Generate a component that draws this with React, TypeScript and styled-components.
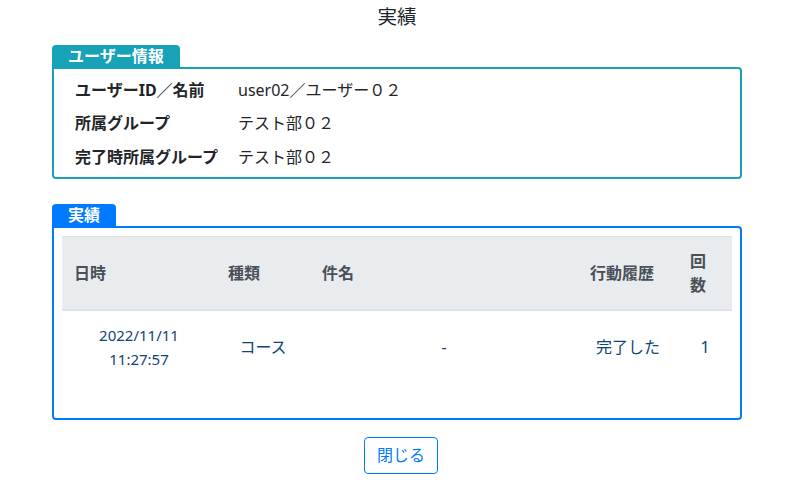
import { Fragment } from "react";
import styled, { createGlobalStyle } from "styled-components";

const GlobalStyle = createGlobalStyle`
  html, body {
    margin: 0;
    padding: 0;
    background: #fff;
  }
  body {
    font-family: "Noto Sans", "Noto Sans CJK JP", sans-serif;
    font-size: 16px;
    line-height: 1.5;
    color: #212529;
  }
`;

const Page = styled.div`
  width: 690px;
  margin-left: 52px;
  padding-top: 2px;
`;

const Title = styled.h1`
  margin: 0 0 13px;
  font-size: 19.5px;
  font-weight: 400;
  line-height: 30px;
  text-align: center;
  color: #212529;
`;

const Section = styled.section`
  display: flex;
  flex-direction: column;
  align-items: flex-start;
  margin-bottom: 25px;
`;

const Tab = styled.div<{ color: string }>`
  background: ${(p) => p.color};
  color: #fff;
  font-weight: 700;
  font-size: 16px;
  line-height: 22px;
  height: 22px;
  padding: 0 16px;
  border-radius: 4px 4px 0 0;
`;

const Panel = styled.div<{ color: string }>`
  align-self: stretch;
  border: 2px solid ${(p) => p.color};
  border-radius: 0 4px 4px 4px;
`;

const InfoGrid = styled.div`
  display: grid;
  grid-template-columns: 163px 1fr;
  grid-auto-rows: 33.5px;
  align-items: center;
  padding: 4px 21px 3px;
`;

const Label = styled.div`
  font-weight: 700;
  font-size: 16px;
`;

const Value = styled.div`
  font-size: 16px;
`;

const TableWrap = styled.div`
  padding: 8px 8px 35px;
`;

const Table = styled.table`
  width: 100%;
  border-collapse: collapse;
  table-layout: fixed;
`;

const Th = styled.th`
  background: #e9ecef;
  color: #495057;
  font-weight: 700;
  text-align: left;
  padding: 12px;
  border-top: 1px solid #dee2e6;
  border-bottom: 2px solid #dee2e6;
  vertical-align: middle;
  font-size: 16px;
  line-height: 24px;
`;

const Td = styled.td<{ $small?: boolean }>`
  color: #0f4377;
  text-align: center;
  padding: 12px;
  vertical-align: middle;
  font-size: ${(p) => (p.$small ? "15px" : "16px")};
  line-height: 24px;
`;

const Footer = styled.div`
  display: flex;
  justify-content: center;
  margin-top: -8px;
  padding-left: 8px;
`;

const CloseButton = styled.button`
  font-family: inherit;
  font-size: 16px;
  line-height: 24px;
  color: #007bff;
  background: #fff;
  border: 1px solid #007bff;
  border-radius: 4px;
  padding: 5.5px 12px;
  cursor: pointer;
`;

const columns = [
  { key: "date", label: "日時", width: 154 },
  { key: "kind", label: "種類", width: 94 },
  { key: "name", label: "件名", width: 268 },
  { key: "action", label: "行動履歴", width: 100 },
  { key: "count", label: "回数", width: 54 },
];

const info = [
  ["ユーザーID／名前", "user02／ユーザー０２"],
  ["所属グループ", "テスト部０２"],
  ["完了時所属グループ", "テスト部０２"],
];

export default function App() {
  return (
    <>
      <GlobalStyle />
      <Page>
        <Title>実績</Title>

        <Section>
          <Tab color="#17a2b8">ユーザー情報</Tab>
          <Panel color="#17a2b8">
            <InfoGrid>
              {info.map(([label, value]) => (
                <Fragment key={label}>
                  <Label>{label}</Label>
                  <Value>{value}</Value>
                </Fragment>
              ))}
            </InfoGrid>
          </Panel>
        </Section>

        <Section>
          <Tab color="#007bff">実績</Tab>
          <Panel color="#007bff">
            <TableWrap>
              <Table>
                <colgroup>
                  {columns.map((c) => (
                    <col key={c.key} style={{ width: c.width }} />
                  ))}
                </colgroup>
                <thead>
                  <tr>
                    {columns.map((c) => (
                      <Th key={c.key}>{c.label}</Th>
                    ))}
                  </tr>
                </thead>
                <tbody>
                  <tr>
                    <Td $small>
                      2022/11/11
                      <br />
                      11:27:57
                    </Td>
                    <Td>コース</Td>
                    <Td>-</Td>
                    <Td>完了した</Td>
                    <Td>1</Td>
                  </tr>
                </tbody>
              </Table>
            </TableWrap>
          </Panel>
        </Section>

        <Footer>
          <CloseButton>閉じる</CloseButton>
        </Footer>
      </Page>
    </>
  );
}
